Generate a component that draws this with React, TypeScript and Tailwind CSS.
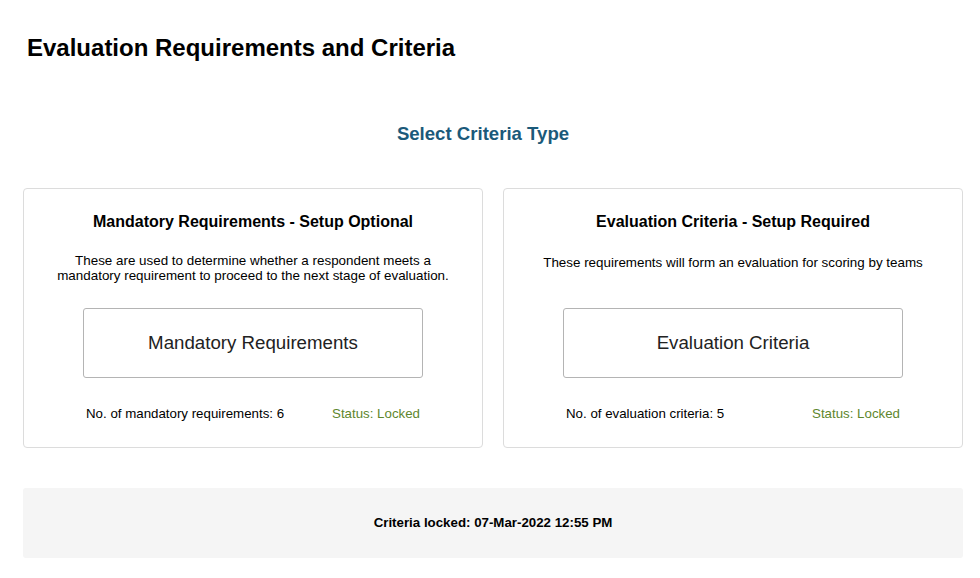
import React from "react";

const cards = [
  {
    title: "Mandatory Requirements - Setup Optional",
    desc: (
      <>
        These are used to determine whether a respondent meets a
        <br />
        mandatory requirement to proceed to the next stage of evaluation.
      </>
    ),
    descTop: "pt-[21px]",
    button: "Mandatory Requirements",
    count: "No. of mandatory requirements: 6",
  },
  {
    title: "Evaluation Criteria - Setup Required",
    desc: <>These requirements will form an evaluation for scoring by teams</>,
    descTop: "pt-[23px]",
    button: "Evaluation Criteria",
    count: "No. of evaluation criteria: 5",
  },
];

export default function App() {
  return (
    <div
      className="w-[980px] h-[578px] bg-white text-black overflow-hidden"
      style={{ fontFamily: '"Liberation Sans", Arial, sans-serif' }}
    >
      <h1 className="pl-[27px] pt-[33px] text-[24px] leading-[30px] font-bold">
        Evaluation Requirements and Criteria
      </h1>

      <h2 className="mt-[59px] w-[966px] text-center text-[18.6px] leading-[24px] font-bold text-[#1b5a7a]">
        Select Criteria Type
      </h2>

      <div className="mt-[42px] ml-[23px] w-[940px] flex gap-[20px]">
        {cards.map((c) => (
          <div
            key={c.title}
            className="flex-1 h-[260px] border border-[#dcdcdc] rounded-[4px] flex flex-col items-center"
          >
            <div className="mt-[23px] h-[20px] text-[16px] leading-[20px] font-bold">{c.title}</div>
            <div className={`h-[56px] ${c.descTop} text-[13.4px] leading-[15px] text-center`}>
              {c.desc}
            </div>
            <button className="mt-[20px] w-[340px] h-[70px] border border-[#b4b4b4] rounded-[3px] bg-white text-[18.7px] text-[#222]">
              {c.button}
            </button>
            <div className="mt-[28px] w-[334px] flex justify-between text-[13.3px] leading-[16px]">
              <span>{c.count}</span>
              <span className="text-[#5e862d]">Status: Locked</span>
            </div>
          </div>
        ))}
      </div>

      <div className="mt-[40px] ml-[23px] w-[940px] h-[70px] bg-[#f5f5f5] rounded-[3px] flex items-center justify-center">
        <span className="text-[13.3px] font-bold">Criteria locked: 07-Mar-2022 12:55 PM</span>
      </div>
    </div>
  );
}
